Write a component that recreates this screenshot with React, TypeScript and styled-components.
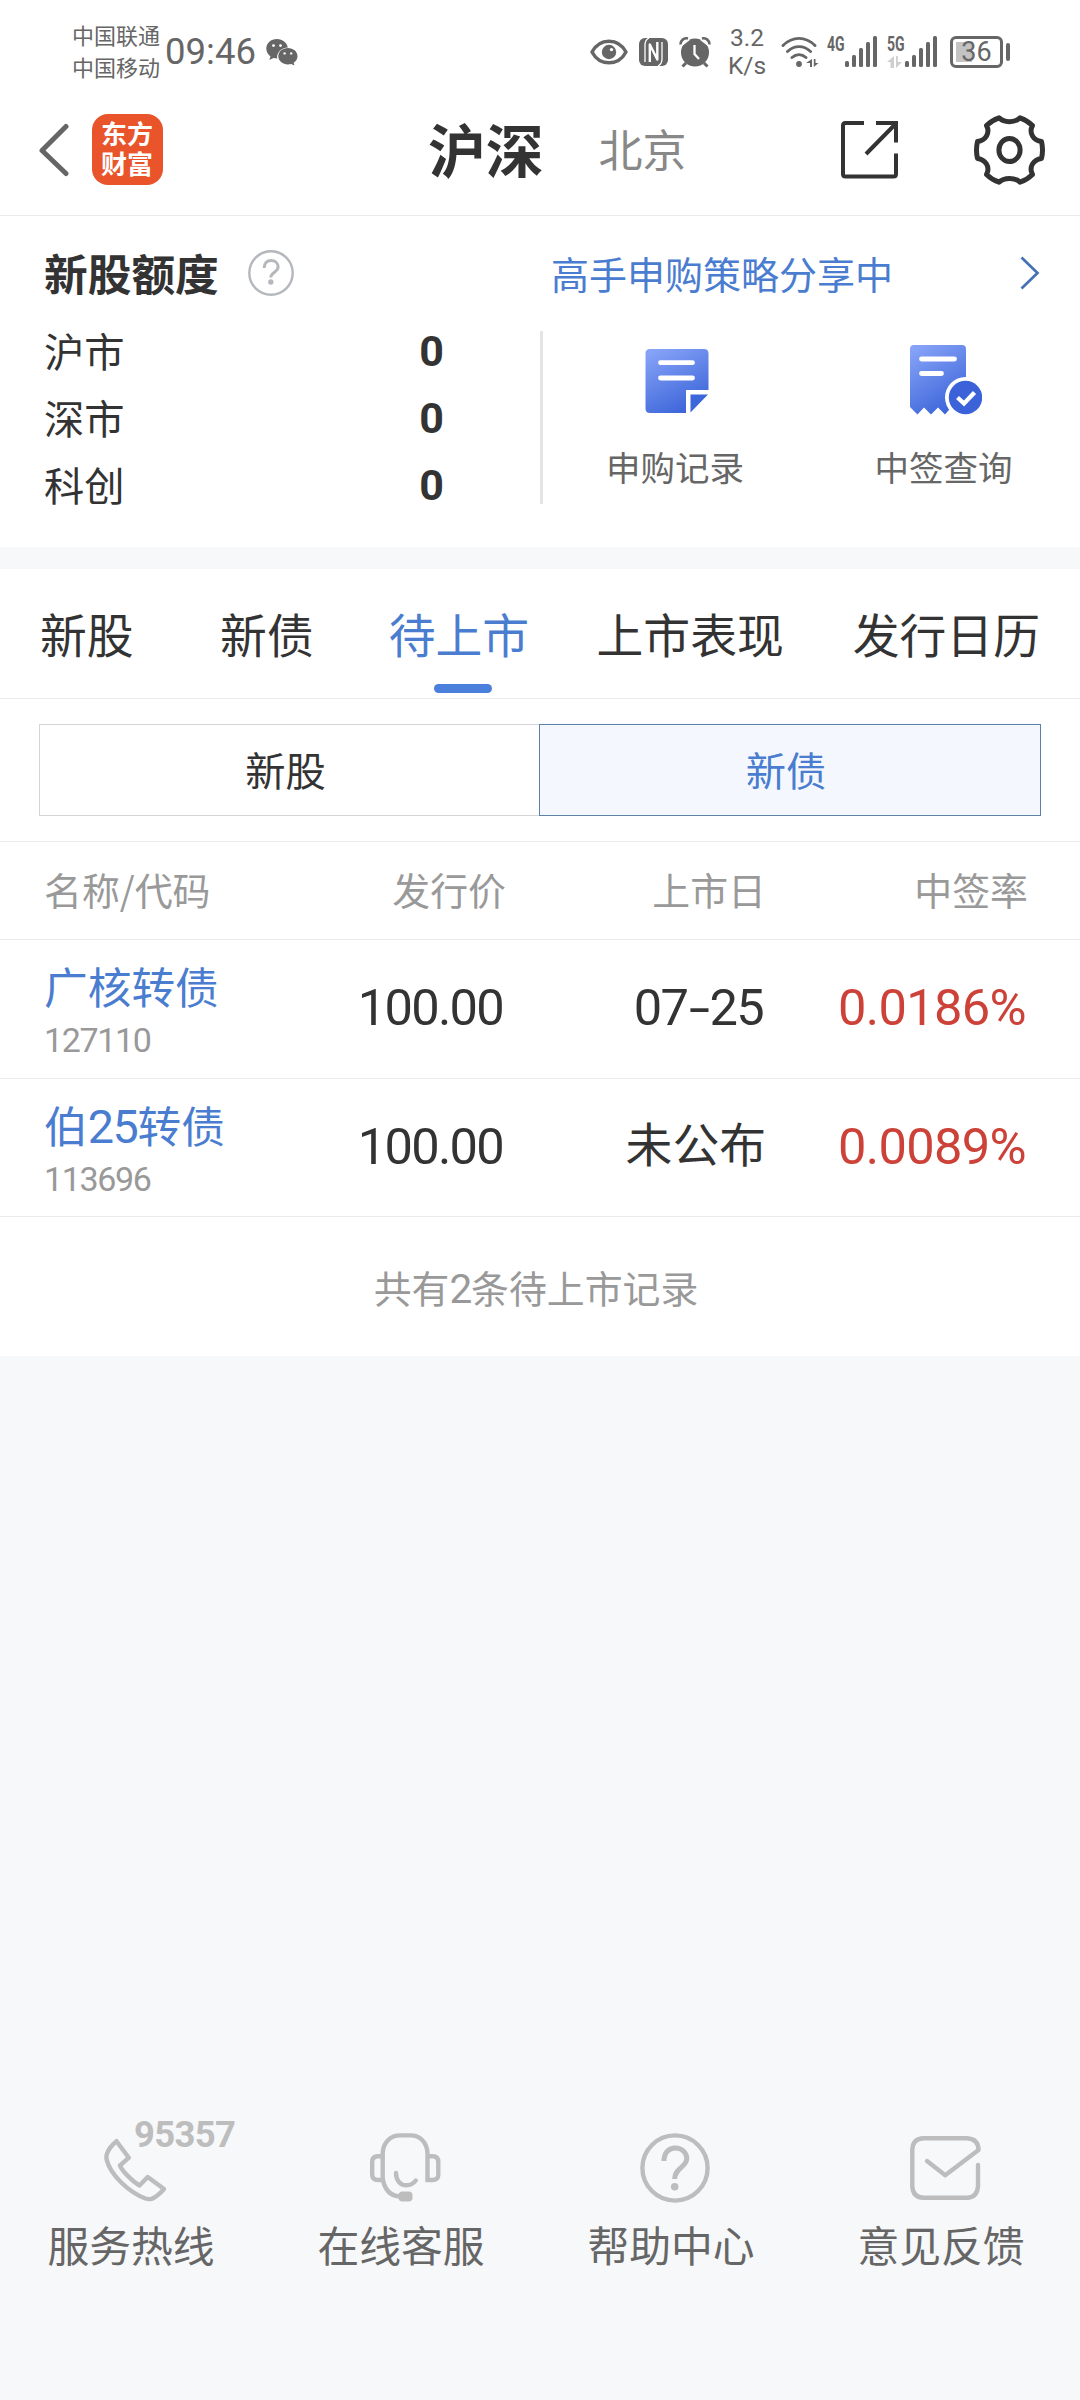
import React from 'react';
import styled, { createGlobalStyle } from 'styled-components';

const CJK = "'Noto Sans CJK SC', 'Noto Sans', sans-serif";
const NUM = "Roboto, 'Noto Sans CJK SC', sans-serif";
const BLUE = '#4a7dd0';
const INK = '#333333';
const MUTED = '#999999';
const GREY = '#666666';

const GlobalStyle = createGlobalStyle`
  *, *::before, *::after { box-sizing: border-box; }
  body { margin: 0; background: #f7f8fa; }
  svg { display: block; flex: none; }
`;

const Screen = styled.div`
  width: 1080px;
  height: 2400px;
  display: flex;
  flex-direction: column;
  background: #f7f8fa;
  color: ${INK};
  font-family: ${CJK};
  white-space: nowrap;
  overflow: hidden;
`;

/* ---------- status bar ---------- */
const StatusBar = styled.header`
  height: 104px;
  padding: 0 70px 0 72px;
  display: flex;
  align-items: center;
  justify-content: space-between;
  background: #fff;
  color: ${GREY};
`;
const StatusGroup = styled.div<{ $gap?: number }>`
  display: flex;
  align-items: center;
  gap: ${p => p.$gap ?? 0}px;
`;
const Carriers = styled.div`
  display: flex;
  flex-direction: column;
  padding-bottom: 4px;
  font-size: 22px;
  line-height: 32px;
`;
const Clock = styled.time`
  margin: 0 10px 0 5px;
  font: 400 36.5px/40px ${NUM};
`;
const NetSpeed = styled.div`
  width: 38px;
  margin: 0 15px 0 17px;
  padding-bottom: 1px;
  display: flex;
  flex-direction: column;
  align-items: center;
  font: 400 24.5px/28px ${NUM};
`;
const Signal = styled.div<{ $gap: number }>`
  display: flex;
  align-items: flex-start;
  height: 32px;
  margin-left: ${p => p.$gap}px;
`;
const SignalTag = styled.div`
  width: 18px;
  display: flex;
  flex-direction: column;
  gap: 3px;
`;
const SignalText = styled.span`
  width: 24px;
  font: 700 19.5px/17px ${NUM};
  transform: scaleX(0.72);
  transform-origin: left;
`;
const Bars = styled.div`
  display: flex;
  align-items: flex-end;
  gap: 3px;
  height: 31px;
`;
const Bar = styled.i<{ $h: number }>`
  width: 4px;
  height: ${p => p.$h}px;
  border-radius: 1.5px;
  background: ${GREY};
`;
const Battery = styled.div`
  display: flex;
  align-items: center;
  gap: 3px;
  margin-left: 13px;
`;
const BatteryBody = styled.div`
  width: 53px;
  height: 32px;
  border: 3px solid ${GREY};
  border-radius: 6px;
  display: flex;
  align-items: center;
  justify-content: center;
  background: linear-gradient(#c3c3c3, #c3c3c3) 3px 3px / 16px 20px no-repeat;
  font: 400 27px/26px ${NUM};
`;
const BatteryCap = styled.i`
  width: 4px;
  height: 18px;
  border-radius: 2px;
  background: ${GREY};
`;

/* ---------- navigation ---------- */
const NavBar = styled.nav`
  height: 112px;
  padding: 0 35px 20px 39px;
  display: flex;
  align-items: center;
  background: #fff;
  border-bottom: 1px solid #ebebeb;
`;
const AppLogo = styled.div`
  width: 71px;
  height: 71px;
  margin-left: 22px;
  padding: 4px 9px 0;
  border-radius: 16px;
  background: #e9542a;
  color: #fff;
  font-size: 26px;
  font-weight: 700;
  line-height: 30px;
  white-space: normal;
  word-break: break-all;
`;
const NavTitle = styled.h1`
  margin: 0 0 0 265px;
  padding-bottom: 4px;
  font-size: 57.8px;
  font-weight: 700;
  line-height: 70px;
`;
const NavOther = styled.span`
  margin-left: 55px;
  padding-bottom: 3px;
  font-size: 44px;
  line-height: 60px;
  color: #888;
`;
const NavActions = styled.div`
  margin-left: auto;
  display: flex;
  align-items: center;
  gap: 76px;
`;

/* ---------- quota ---------- */
const Quota = styled.section`
  height: 331px;
  background: #fff;
  display: flex;
`;
const QuotaLeft = styled.div`
  width: 540px;
  padding: 27px 96px 0 44px;
`;
const QuotaHead = styled.div`
  height: 60px;
  display: flex;
  align-items: center;
  gap: 29px;
`;
const QuotaTitle = styled.h2`
  margin: 0;
  padding-bottom: 3px;
  font-size: 43.7px;
  line-height: 56px;
  font-weight: 700;
`;
const QuotaRow = styled.div`
  height: 67px;
  display: flex;
  align-items: center;
  justify-content: space-between;
  font-size: 40.3px;
  line-height: 67px;
  &:nth-child(2) { margin-top: 13px; }
`;
const QuotaLabel = styled.span`
  margin-top: -1px;
`;
const QuotaValue = styled.b`
  padding-top: 3px;
  font: 700 43px/67px ${NUM};
`;
const QuotaRight = styled.div`
  flex: 1;
  padding-top: 28px;
`;
const StrategyLink = styled.a`
  height: 60px;
  padding: 0 40px 2px 11px;
  display: flex;
  align-items: center;
  justify-content: space-between;
  font-size: 38px;
  line-height: 56px;
  color: ${BLUE};
`;
const Actions = styled.div`
  height: 173px;
  margin-top: 27px;
  border-left: 3px solid #e5e5e5;
  display: grid;
  grid-template-columns: 264px 273px;
`;
const Action = styled.div`
  display: flex;
  flex-direction: column;
  align-items: center;
  font-size: 34.5px;
  line-height: 50px;
  color: ${GREY};
`;
const ActionIcon = styled.div`
  height: 110px;
  padding: 14px 0 0 4px;
`;

/* ---------- tabs ---------- */
const Tabs = styled.div`
  height: 130px;
  margin-top: 22px;
  padding-left: 40px;
  display: flex;
  background: #fff;
  border-bottom: 1px solid #ebebeb;
`;
const Tab = styled.div<{ $on?: boolean; $gap: number }>`
  margin-left: ${p => p.$gap}px;
  padding-top: 29px;
  display: flex;
  flex-direction: column;
  align-items: center;
  font-size: 46.8px;
  line-height: 70px;
  color: ${p => (p.$on ? BLUE : INK)};
`;
const Underline = styled.i`
  width: 58px;
  height: 9px;
  margin: 16px 0 0 9px;
  border-radius: 5px;
  background: #4a7fdc;
`;

const Segments = styled.div`
  height: 143px;
  padding: 25px 39px;
  display: grid;
  grid-template-columns: 500px 502px;
  background: #fff;
  border-bottom: 1px solid #ebebeb;
`;
const Segment = styled.div<{ $on?: boolean }>`
  height: 92px;
  padding: 0 8px 4px 0;
  display: flex;
  align-items: center;
  justify-content: center;
  font-size: 40.3px;
  border: 1px solid ${p => (p.$on ? '#5f80a8' : '#d3d5d8')};
  border-right-width: ${p => (p.$on ? 1 : 0)}px;
  background: ${p => (p.$on ? '#f4f8fe' : '#fff')};
  color: ${p => (p.$on ? BLUE : INK)};
`;

/* ---------- table ---------- */
const Row = styled.div<{ $h: number }>`
  height: ${p => p.$h}px;
  padding-left: 44px;
  display: grid;
  grid-template-columns: 220px 242px 260px 262px;
  align-items: center;
  background: #fff;
  border-bottom: 1px solid #ebebeb;
`;
const HeadCell = styled.div<{ $left?: boolean }>`
  padding-bottom: 3px;
  text-align: ${p => (p.$left ? 'left' : 'right')};
  font-size: 37.9px;
  line-height: 56px;
  color: ${MUTED};
`;
const NameCell = styled.div`
  align-self: start;
  display: flex;
  flex-direction: column;
  gap: 5px;
  padding-top: 17px;
`;
const BondName = styled.span`
  height: 56px;
  font-size: 43.7px;
  line-height: 56px;
  color: ${BLUE};
`;
const Digits = styled.span`
  font-family: ${NUM};
  font-size: 1.07em;
  line-height: 1;
  letter-spacing: -0.03em;
`;
const BondCode = styled.span`
  font: 400 34px/44px ${NUM};
  letter-spacing: -0.04em;
  color: ${MUTED};
`;
const ValueCell = styled.div<{ $red?: boolean }>`
  text-align: right;
  font: 400 50.6px/60px ${NUM};
  letter-spacing: ${p => (p.$red ? -0.013 : -0.034)}em;
  padding: 0 ${p => (p.$red ? 2 : 3)}px 2px 0;
  color: ${p => (p.$red ? '#cd4238' : INK)};
`;
const Dash = styled.span`
  display: inline-block;
  margin: 0 5px;
  transform: scaleX(1.5);
`;
const TextCell = styled.div`
  text-align: right;
  font-size: 46.8px;
  line-height: 60px;
  padding-bottom: 11px;
`;
const Summary = styled.div`
  height: 139px;
  padding: 0 8px 1px 0;
  display: flex;
  align-items: center;
  justify-content: center;
  background: #fff;
  font-size: 37.9px;
  color: ${MUTED};
`;

/* ---------- footer ---------- */
const Footer = styled.footer`
  height: 280px;
  margin-top: auto;
  display: grid;
  grid-template-columns: repeat(4, 270px);
`;
const Service = styled.div`
  position: relative;
  display: flex;
  flex-direction: column;
  align-items: center;
`;
const ServiceIcon = styled.div`
  height: 94px;
  padding-top: 13px;
`;
const ServiceLabel = styled.div`
  margin-right: 8px;
  font-size: 41.8px;
  line-height: 60px;
  color: ${GREY};
`;
const Hotline = styled.div`
  position: absolute;
  left: 134px;
  top: -3px;
  font: 700 36.5px/36px ${NUM};
  letter-spacing: -0.7px;
  color: #bdbdbd;
`;

/* ---------- icons ---------- */
const WeChat = () => (
  <svg width="32" height="27" viewBox="0 0 32 27" fill={GREY}>
    <path d="M11 0C4.900 0 .3 4.200.3 9.600c0 3.300 1.600 6 4.200 7.800L3.300 21l4.200-2.100c1.200.3 2.400.5 3.700.5-.8-6 4.200-11 10.600-11C21 3.600 16.500 0 11 0Z" />
    <path d="M31.500 17.200c0-4.600-4.300-8.200-9.600-8.200s-9.600 3.600-9.600 8.200 4.300 8.200 9.600 8.200c1.200 0 2.300-.2 3.300-.5l3.300 1.700-.9-2.900c2.400-1.500 3.900-3.800 3.900-6.500Z" />
    <g fill="#fff"><circle cx="7.500" cy="6.600" r="1.400" /><circle cx="14.500" cy="6.600" r="1.400" /><circle cx="18.600" cy="14.400" r="1.200" /><circle cx="25.200" cy="14.400" r="1.200" /></g>
  </svg>
);
const Eye = () => (
  <svg width="38" height="26" viewBox="0 0 38 26" fill="none">
    <path d="M2 13C6 5.500 12 2.200 19 2.200S32 5.500 36 13c-4 7.500-10 10.800-17 10.800S6 20.500 2 13Z" stroke={GREY} strokeWidth="3.500" strokeLinejoin="round" />
    <circle cx="19" cy="13" r="7.200" fill={GREY} /><circle cx="21.500" cy="10.600" r="1.700" fill="#fff" />
  </svg>
);
const Nfc = () => (
  <svg width="29" height="28" viewBox="0 0 29 28" fill="none">
    <rect width="29" height="28" rx="6" fill={GREY} />
    <path d="M10 0Q6 2 6 7V24" stroke="#fff" strokeWidth="1.300" />
    <path d="M19 28Q23 26 23 21V4" stroke="#fff" strokeWidth="1.300" />
    <path d="M10.800 24V6.500L18.300 21.500V4" stroke="#fff" strokeWidth="2.400" strokeLinejoin="round" />
  </svg>
);
const Alarm = () => (
  <svg width="32" height="31" viewBox="0 0 32 31" fill="none" stroke={GREY}>
    <circle cx="16" cy="15.500" r="14" fill={GREY} stroke="none" />
    <path d="M7 26l-3.500 3.500M25 26l3.500 3.500" strokeWidth="3" />
    <path d="M1.500 7.500A6 6 0 0 1 9 1.500M30.500 7.500A6 6 0 0 0 23 1.500" strokeWidth="2.600" />
    <path d="M1.500 9.500L10.500 2.500M30.500 9.500L21.500 2.500" stroke="#fff" strokeWidth="1.300" />
    <path d="M15.500 8v9l4.500 5" stroke="#fff" strokeWidth="2.300" />
  </svg>
);
const Wifi = () => (
  <svg width="38" height="32" viewBox="0 0 38 32" fill="none" stroke={GREY} strokeWidth="2.900" strokeLinecap="round">
    <path d="M2 9.500C11.500 0 24.500 0 34 9.500M6.500 15.500c7-6.500 16-6.500 23 0M11 21.500c4.200-3.700 9.800-3.700 14 0" />
    <circle cx="18" cy="28" r="2.900" fill={GREY} stroke="none" />
    <path d="M31 23v8h-2v-4h-4zM32.800 31v-8h1.700v4h3z" fill={GREY} stroke="none" />
  </svg>
);
const DataArrows = () => (
  <svg width="16" height="12" viewBox="0 0 16 12" fill="#cfcfcf">
    <path d="M7 0v12H3.500V6H0zM9 12V0h1.800v6H15z" />
  </svg>
);
const BackArrow = () => (
  <svg width="31" height="54" viewBox="0 0 31 54" fill="none" stroke={GREY} strokeWidth="5" strokeLinecap="round" strokeLinejoin="round">
    <path d="M27 3.500L3 27.500 27 50.500" />
  </svg>
);
const Share = () => (
  <svg width="57" height="58" viewBox="0 0 57 58" fill="none" stroke={INK} strokeWidth="4">
    <path d="M23 2H4.500Q2 2 2 4.500V53q0 2.500 2.500 2.500H52.500q2.500 0 2.500-2.500V32.500M35 2H55V21.500M25 33L54.500 3" />
  </svg>
);
const Gear = () => (
  <svg width="71" height="72" viewBox="0 0 71 72" fill="none" stroke={INK} strokeWidth="5" strokeLinejoin="round">
    <path d="M25 3.800C30 8.900 41 8.900 46 3.800Q53.500 6.500 58.500 11.500C54.500 19 59.500 26.500 67.500 27.500Q69.500 36 67.500 44.500C59.500 45.500 54.500 53 58.500 60.500Q53.500 65.500 46 68.200C41 63.100 30 63.100 25 68.200Q17.500 65.500 12.500 60.500C16.500 53 11.500 45.500 3.500 44.500Q1.500 36 3.500 27.500C11.500 26.500 16.500 19 12.500 11.500Q17.500 6.500 25 3.800Z" />
    <ellipse cx="35.500" cy="36" rx="10.600" ry="11.500" />
  </svg>
);
const SmallHelp = () => (
  <svg width="46" height="46" viewBox="0 0 46 46" fill="none" stroke="#b4b8bd" strokeWidth="2.400">
    <circle cx="23" cy="23" r="21.700" />
    <path d="M16.200 18c0-5 3-7.600 6.900-7.600s7 2.700 7 6.600c0 5-7.300 5.500-7.300 10.500" strokeWidth="3" />
    <circle cx="22.800" cy="32" r="2.700" fill="#b4b8bd" stroke="none" />
  </svg>
);
const Chevron = () => (
  <svg width="20" height="34" viewBox="0 0 20 34" fill="none" stroke="#4472b4" strokeWidth="2.700">
    <path d="M1.500 1.500L17.500 17 1.500 32.500" />
  </svg>
);
const Gradient = ({ id }: { id: string }) => (
  <defs>
    <linearGradient id={id} x1="0.200" y1="0" x2="0.700" y2="1">
      <stop offset="0" stopColor="#85a2f7" /><stop offset="1" stopColor="#3a63d8" />
    </linearGradient>
  </defs>
);
const NoteIcon = () => (
  <svg width="64" height="70" viewBox="0 0 64 70">
    <Gradient id="note" />
    <path d="M5 4H59Q63.500 4 63.500 8.500V45H41V68H5Q.5 68 .5 63.500V8.500Q.5 4 5 4Z" fill="url(#note)" />
    <path d="M45.500 49.500H63L45.500 67.500Z" fill="#3d66da" />
    <path d="M15.500 17.700H47.500M15.500 33H47.500" stroke="#fff" strokeWidth="4.800" strokeLinecap="round" />
  </svg>
);
const ReceiptIcon = () => (
  <svg width="72" height="70" viewBox="0 0 72 70">
    <Gradient id="receipt" />
    <path d="M4 0H52Q56 0 56 4V50L38 66 35 69.500 28 62.500 21 69.500 14 62.500 7.500 69.500 0 62V4Q0 0 4 0Z" fill="url(#receipt)" />
    <circle cx="55.500" cy="52.500" r="20.500" fill="#fff" />
    <circle cx="55.500" cy="52.500" r="16.700" fill="#3b62d8" />
    <path d="M11.500 14H44.500M11.500 28.500H31.500" stroke="#fff" strokeWidth="4.800" strokeLinecap="round" />
    <path d="M47.500 52.500L54 58.500 64.500 47.500" fill="none" stroke="#fff" strokeWidth="4.300" />
  </svg>
);
const Phone = () => (
  <svg width="62" height="70" viewBox="0 -6 62 70" fill="none" stroke="#bdbdbd" strokeWidth="4.400" strokeLinejoin="round">
    <path d="M12.500 2.200L24.800 18.700 16 26.500C18 32 28 42 35.500 46.500L43.700 38 60 50C56.500 54 51.500 58.500 47.500 59.800Q44.500 60.500 41.500 59.500C24 53 6 35 2.600 20.500Q2.200 18 2.700 15.500C4 11 8.500 5.500 12.500 2.200Z" />
  </svg>
);
const Headset = () => (
  <svg width="71" height="70" viewBox="0 0 71 70" fill="none" stroke="#bdbdbd" strokeWidth="4.400">
    <path d="M12.700 46V21C12.700 9 21 2.400 30 2.400H40.500C49.500 2.400 57.500 9 57.500 21V47H62.500Q68.300 47 68.300 41.500V29Q68.300 23.200 62.500 23.200H57.500M12.700 23.200H8Q2.200 23.200 2.200 29V41.500Q2.200 47 8 47H13C15 57 21 63 30 63.500" />
    <rect x="28.500" y="58.500" width="14" height="10" rx="4" fill="#bdbdbd" stroke="none" />
    <path d="M26 40C26 47 30 52.300 36.500 52.300Q42 52.300 45.800 47.500" strokeLinecap="round" />
  </svg>
);
const Help = () => (
  <svg width="70" height="70" viewBox="0 0 70 70" fill="none" stroke="#bdbdbd" strokeWidth="4.400">
    <circle cx="35" cy="35" r="32.600" />
    <path d="M24 28C24 19.500 29 15 35.300 15S46.800 19.500 46.800 25.500C46.800 34 34.600 35 34.600 46" strokeWidth="5" />
    <circle cx="34.700" cy="53.700" r="3.800" fill="#bdbdbd" stroke="none" />
  </svg>
);
const Mail = () => (
  <svg width="71" height="70" viewBox="0 -3 71 70" fill="none" stroke="#bdbdbd" strokeWidth="4.400" strokeLinecap="round" strokeLinejoin="round">
    <path d="M68 29V50.500Q67 61.500 57 61.800H13.500Q3 61.500 2.300 50.500V13.500Q3 2.500 13.500 2.300H57Q68.500 3 68.500 14L35.200 39.300 17 25" />
  </svg>
);

const bars = [6, 12, 19, 25, 31];
const quotas = ['沪市', '深市', '科创'];
const services = [
  { label: '服务热线', Icon: Phone, phone: '95357' },
  { label: '在线客服', Icon: Headset },
  { label: '帮助中心', Icon: Help },
  { label: '意见反馈', Icon: Mail },
];

export default function App() {
  return (
    <Screen>
      <GlobalStyle />
      <StatusBar>
        <StatusGroup>
          <Carriers><span>中国联通</span><span>中国移动</span></Carriers>
          <Clock>09:46</Clock>
          <WeChat />
        </StatusGroup>
        <StatusGroup>
          <StatusGroup $gap={11}><Eye /><Nfc /><Alarm /></StatusGroup>
          <NetSpeed><span>3.2</span><span>K/s</span></NetSpeed>
          <Wifi />
          <Signal $gap={8}>
            <SignalTag><SignalText>4G</SignalText></SignalTag>
            <Bars>{bars.map(h => <Bar key={h} $h={h} />)}</Bars>
          </Signal>
          <Signal $gap={10}>
            <SignalTag><SignalText>5G</SignalText><DataArrows /></SignalTag>
            <Bars>{bars.map(h => <Bar key={h} $h={h} />)}</Bars>
          </Signal>
          <Battery><BatteryBody>36</BatteryBody><BatteryCap /></Battery>
        </StatusGroup>
      </StatusBar>

      <NavBar>
        <BackArrow />
        <AppLogo>东方财富</AppLogo>
        <NavTitle>沪深</NavTitle>
        <NavOther>北京</NavOther>
        <NavActions><Share /><Gear /></NavActions>
      </NavBar>

      <Quota>
        <QuotaLeft>
          <QuotaHead><QuotaTitle>新股额度</QuotaTitle><SmallHelp /></QuotaHead>
          {quotas.map(q => (
            <QuotaRow key={q}><QuotaLabel>{q}</QuotaLabel><QuotaValue>0</QuotaValue></QuotaRow>
          ))}
        </QuotaLeft>
        <QuotaRight>
          <StrategyLink>高手申购策略分享中<Chevron /></StrategyLink>
          <Actions>
            <Action><ActionIcon><NoteIcon /></ActionIcon>申购记录</Action>
            <Action><ActionIcon><ReceiptIcon /></ActionIcon>中签查询</Action>
          </Actions>
        </QuotaRight>
      </Quota>

      <Tabs>
        <Tab $gap={0}>新股</Tab>
        <Tab $gap={86.5}>新债</Tab>
        <Tab $gap={75} $on>待上市<Underline /></Tab>
        <Tab $gap={67.5}>上市表现</Tab>
        <Tab $gap={69}>发行日历</Tab>
      </Tabs>
      <Segments>
        <Segment>新股</Segment>
        <Segment $on>新债</Segment>
      </Segments>

      <Row $h={98}>
        <HeadCell $left>名称/代码</HeadCell>
        <HeadCell>发行价</HeadCell>
        <HeadCell>上市日</HeadCell>
        <HeadCell>中签率</HeadCell>
      </Row>
      <Row $h={139}>
        <NameCell><BondName>广核转债</BondName><BondCode>127110</BondCode></NameCell>
        <ValueCell>100.00</ValueCell>
        <ValueCell>07<Dash>-</Dash>25</ValueCell>
        <ValueCell $red>0.0186%</ValueCell>
      </Row>
      <Row $h={138}>
        <NameCell><BondName>伯<Digits>25</Digits>转债</BondName><BondCode>113696</BondCode></NameCell>
        <ValueCell>100.00</ValueCell>
        <TextCell>未公布</TextCell>
        <ValueCell $red>0.0089%</ValueCell>
      </Row>
      <Summary><span>共有<Digits>2</Digits>条待上市记录</span></Summary>

      <Footer>
        {services.map(({ label, Icon, phone }) => (
          <Service key={label}>
            <ServiceIcon><Icon /></ServiceIcon>
            {phone && <Hotline>{phone}</Hotline>}
            <ServiceLabel>{label}</ServiceLabel>
          </Service>
        ))}
      </Footer>
    </Screen>
  );
}
